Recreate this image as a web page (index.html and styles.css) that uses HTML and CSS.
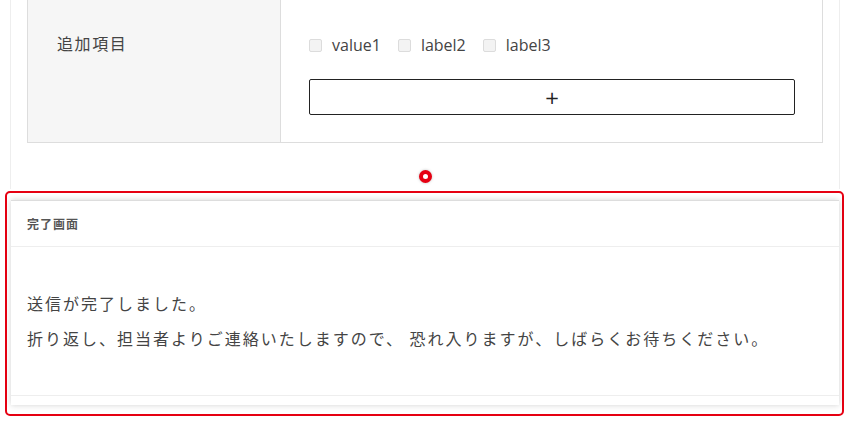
FILE: index.html
```html
<!DOCTYPE html>
<html lang="ja">
<head>
    <meta charset="UTF-8">
    <meta name="viewport" content="width=device-width, initial-scale=1.0">
    <title>フォーム設定</title>
    <link rel="stylesheet" href="styles.css">
</head>
<body>
    <div class="form-card">
        <table class="form-table">
            <tr>
                <th>追加項目</th>
                <td>
                    <div class="check-row">
                        <label class="check-item"><input type="checkbox" disabled> value1</label>
                        <label class="check-item"><input type="checkbox" disabled> label2</label>
                        <label class="check-item"><input type="checkbox" disabled> label3</label>
                    </div>
                    <button class="add-btn">+</button>
                </td>
            </tr>
        </table>
        <span class="handle"></span>
    </div>

    <div class="highlight">
        <div class="panel">
            <div class="panel-head">完了画面</div>
            <div class="panel-body">
                <p>送信が完了しました。</p>
                <p>折り返し、担当者よりご連絡いたしますので、 恐れ入りますが、しばらくお待ちください。</p>
            </div>
            <div class="panel-foot"></div>
        </div>
    </div>
</body>
</html>
```

FILE: styles.css
```css
:root {
    --border: #dddddd;
    --text: #444444;
    --muted: #555555;
    --accent: #e60012;
}

* {
    margin: 0;
    padding: 0;
    box-sizing: border-box;
}

body {
    background: #ffffff;
    color: var(--text);
    font-family: "Open Sans", "Noto Sans CJK JP", sans-serif;
    font-size: 16px;
}

.form-card {
    position: relative;
    margin: -1px 13px 0 10px;
    padding: 0 16px 46px;
    border: 1px solid #eeeeee;
    border-top: none;
    border-bottom: none;
}

.form-table {
    width: 100%;
    border-collapse: collapse;
}

.form-table th,
.form-table td {
    border: 1px solid var(--border);
    vertical-align: top;
    text-align: left;
}

.form-table th {
    width: 253px;
    background: #f6f6f6;
    padding: 32px 20px 0 29px;
    font-weight: normal;
    letter-spacing: 0.1em;
    line-height: 24px;
}

.form-table td {
    padding: 33px 27px 27px 28px;
}

.check-row {
    display: flex;
    gap: 17px;
    line-height: 24px;
}

.check-item {
    display: flex;
    align-items: center;
    gap: 10px;
}

.check-item input {
    appearance: none;
    width: 13px;
    height: 13px;
    border: 1px solid #dcdcdc;
    border-radius: 2px;
    background: #f3f3f3;
}

.add-btn {
    display: block;
    width: 100%;
    height: 36px;
    margin-top: 22px;
    border: 1px solid #222222;
    border-radius: 2px;
    background: #ffffff;
    color: #222222;
    font-family: "DejaVu Sans", sans-serif;
    font-size: 18px;
    cursor: pointer;
}

.handle {
    position: absolute;
    left: 50%;
    bottom: 6px;
    width: 13px;
    height: 13px;
    margin-left: -6px;
    border-radius: 50%;
    border: 4px solid var(--accent);
    background: #ffffff;
    box-shadow: 0 0 3px rgba(0, 0, 0, 0.25);
}

.highlight {
    margin: 2px 9px 0 5px;
    padding: 7px 3px 9px 4px;
    border: 2px solid var(--accent);
    border-radius: 5px;
}

.panel {
    background: #ffffff;
    border-top: 1px solid #dddddd;
    box-shadow: 0 0 6px rgba(0, 0, 0, 0.18);
}

.panel-head {
    padding: 14px 16px 13px;
    border-bottom: 1px solid #eeeeee;
    font-size: 12px;
    font-weight: bold;
    letter-spacing: 0.08em;
    color: var(--muted);
    line-height: 18px;
    font-family: "Noto Sans CJK JP", sans-serif;
}

.panel-body {
    padding: 39px 16px 39px;
    line-height: 35px;
    letter-spacing: 2px;
    font-family: "Noto Sans CJK JP", sans-serif;
}

.panel-foot {
    height: 10px;
    border-top: 1px solid #eeeeee;
}
```
